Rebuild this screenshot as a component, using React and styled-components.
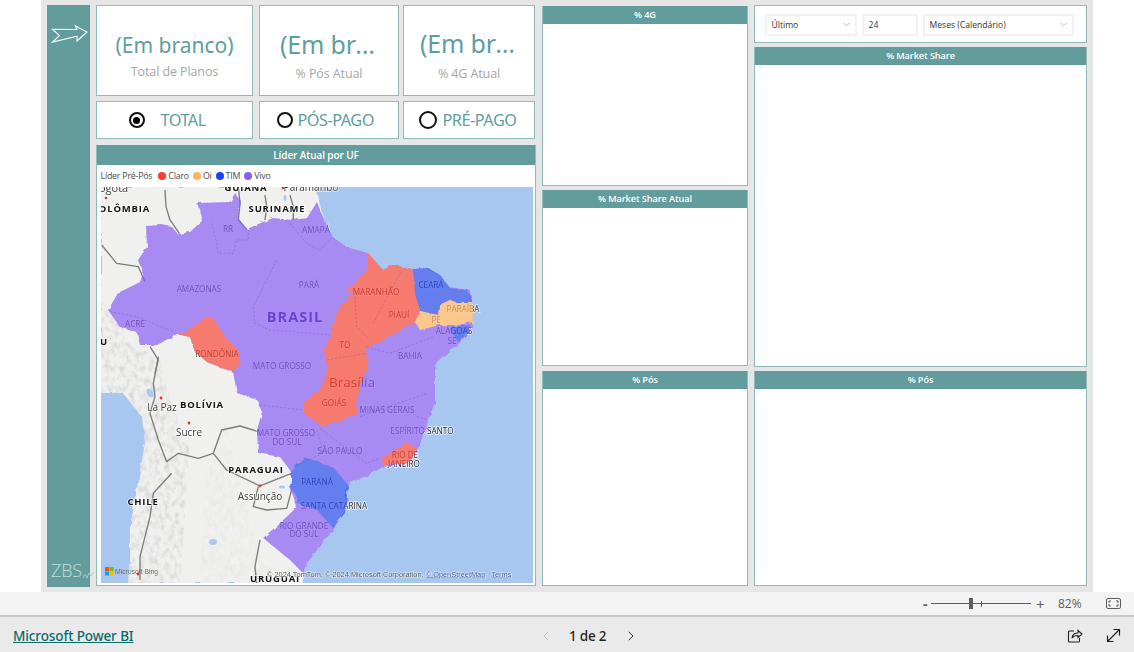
import React from 'react';
import styled, { createGlobalStyle } from 'styled-components';
import { ChevronLeft, ChevronRight, ChevronDown } from 'lucide-react';

const Global = createGlobalStyle`
  html, body { margin: 0; padding: 0; background: #fff; }
  body { font-family: "Open Sans", "Noto Sans", sans-serif; width: 1134px; height: 652px; overflow: hidden; }
`;

const TEAL = '#629c9c';
const EDGE = '#8fbcb9';

const Page = styled.div`display: flex; flex-direction: column; width: 1134px; height: 652px;`;
const Stage = styled.div`height: 592px; padding-left: 41px; padding-right: 41px; background: #fff; flex: none;`;
const Canvas = styled.div`
  height: 592px; background: #e6e6e6; padding: 5px 6px 5px 6px; display: grid; box-sizing: border-box;
  grid-template-columns: 43px 440px 206px 333px; column-gap: 6px;
`;
const Sidebar = styled.aside`
  background: ${TEAL}; height: 582px; display: flex; flex-direction: column; justify-content: space-between;
  align-items: flex-start; padding: 20px 0 7px 4px; box-sizing: border-box;
`;
const Logo = styled.div`display: flex; align-items: flex-end; color: #c4dcda; font-size: 18px; font-weight: 300; line-height: 20px; letter-spacing: -0.2px; gap: 1px;`;
const Col = styled.div`display: flex; flex-direction: column; gap: ${p => p.$gap || 4}px; height: 582px; min-width: 0;`;
const Row = styled.div`display: flex; gap: 0; height: ${p => p.$h}px; flex: none;`;
const Card = styled.div`
  width: ${p => p.$w}px; margin-right: ${p => p.$mr || 0}px; height: 100%; box-sizing: border-box; background: #fff;
  border: 1.5px solid ${EDGE}; display: flex; flex-direction: column; align-items: center; justify-content: center;
  padding: 10px 8px 0; flex: none; min-width: 0;
`;
const Value = styled.div`
  font-size: ${p => p.$size}px; line-height: 32px; color: #5f9ea0; max-width: ${p => p.$max || 140}px; overflow: hidden;
  text-overflow: ellipsis; white-space: nowrap; font-family: "Noto Sans", sans-serif; letter-spacing: ${p => p.$ls || 0}px;
`;
const Caption = styled.div`font-size: 12.5px; line-height: 20px; color: #a6a6a6; margin-top: ${p => p.$mt || 3}px; letter-spacing: -.1px;`;
const RadioCard = styled.div`
  width: ${p => p.$w}px; margin-right: ${p => p.$mr || 0}px; height: 100%; box-sizing: border-box; background: #fff; flex: none;
  border: 1.5px solid ${EDGE}; display: flex; align-items: center; gap: ${p => p.$gap}px; padding-left: ${p => p.$pad}px;
`;
const Radio = styled.span`
  display: flex; align-items: center; justify-content: center; box-sizing: border-box; flex: none;
  width: ${p => p.$s}px; height: ${p => p.$s}px; border-radius: 50%; border: 2.5px solid #111; background: #fff;
  &::after { content: ''; display: ${p => (p.$on ? 'block' : 'none')}; width: 7px; height: 7px; border-radius: 50%; background: #000; }
`;
const RadioLabel = styled.span`color: #5f9ea0; font-size: 16.3px; letter-spacing: -.5px; white-space: nowrap; font-family: "Noto Sans", sans-serif; margin-bottom: 1px;`;
const Panel = styled.section`
  display: flex; flex-direction: column; box-sizing: border-box; background: #fff; border: 1px solid ${EDGE};
  border-width: 0 1.5px 1.5px 1.5px; height: ${p => p.$h}px; margin-top: ${p => p.$mt || 0}px; flex: none; overflow: hidden;
`;
const Head = styled.h2`
  margin: 0 -1.5px; height: ${p => p.$h || 18}px; box-sizing: border-box; padding-bottom: 1px; flex: none; background: ${TEAL}; color: #fff; font-size: ${p => p.$fs || 9.2}px; font-weight: 600;
  display: flex; align-items: center; justify-content: center; letter-spacing: -.1px;
`;
const Legend = styled.div`display: flex; align-items: center; height: 22px; flex: none; padding-left: 3.5px; font-size: 8.8px; color: #4b4b4b; letter-spacing: -.2px;`;
const LegendTitle = styled.span`margin-right: 6px;`;
const LegendItem = styled.span`
  display: flex; align-items: center; margin-right: 4px; gap: 2px;
  &::before { content: ''; width: 8px; height: 8px; border-radius: 50%; background: ${p => p.$c}; }
`;
const MapBox = styled.div`margin: 0 1.5px 0 3.5px; height: 396px; flex: none; overflow: hidden;`;
const MapSvg = styled.svg`display: block; width: 432px; height: 396px; filter: blur(.3px);`;
const Slicer = styled.div`
  height: 38px; flex: none; background: #fff; border: 1.5px solid ${EDGE}; box-sizing: border-box; display: flex; align-items: center;
  padding: 1px 0 0 9.5px; gap: 5px;
`;
const Field = styled.div`
  width: ${p => p.$w}px; height: 22px; box-sizing: border-box; border: 2px solid #f2f2f2; display: flex; align-items: center; justify-content: space-between;
  padding: 0 3px 0 5px; font-size: 8.6px; color: #333; flex: none;
  svg { color: #888; }
`;
const ZoomBar = styled.div`
  height: 25px; flex: none; background: #f3f3f3; border-bottom: 2px solid #c9c9c9; box-sizing: border-box; display: flex;
  align-items: center; justify-content: flex-end; padding-right: 13px; color: #605e5c;
`;
const Minus = styled.span`font-size: 14px; font-weight: 700; width: 9px; line-height: 14px; margin-right: -1px;`;
const Track = styled.div`
  position: relative; width: 100px; height: 1px; background: #605e5c; margin-left: 0;
`;
const Thumb = styled.span`position: absolute; left: 38px; top: -5px; width: 4px; height: 11px; background: #605e5c;`;
const Tick = styled.span`position: absolute; left: 50px; top: -2px; width: 1px; height: 6px; background: #605e5c;`;
const Plus = styled.span`font-size: 15px; margin-left: 5px; width: 11px; line-height: 14px;`;
const Pct = styled.span`font-size: 12px; margin-left: 11px; width: 48px;`;
const Footer = styled.footer`
  flex: 1; background: #eaeaea; display: grid; grid-template-columns: 525px auto 1fr; align-items: center; padding: 2px 13px 0 13px;
`;
const Brand = styled.a`font-size: 13.5px; font-weight: 500; color: #0b6a6a; text-decoration: underline; font-family: "Noto Sans", sans-serif; letter-spacing: -.1px; justify-self: start;`;
const Pager = styled.div`display: flex; align-items: center; gap: 15px; font-size: 13.5px; font-weight: 500; color: #252423; letter-spacing: -.2px; font-family: "Noto Sans", sans-serif;`;
const PageText = styled.span`margin-right: 2px;`;
const Tools = styled.div`display: flex; gap: 23px; justify-self: end; align-items: center;`;

const ClipT = ({ x, y, t, k = 'reg' }) => {
  const styles = {
    reg: { fontSize: 8.2, fill: '#2c2c2c', fontWeight: 400, letterSpacing: 0 },
    city: { fontSize: 10, fill: '#3a3a3a', fontWeight: 400 },
    big2: { fontSize: 11, fill: '#3a3a3a', fontWeight: 400 },
    cap: { fontSize: 13.5, fill: '#7a1c14', fontWeight: 400 },
    bold: { fontSize: 9.5, fill: '#111', fontWeight: 700, letterSpacing: 0.8 },
    big: { fontSize: 14.5, fill: '#1e0667', fontWeight: 700, letterSpacing: 1 },
  }[k];
  return (
    <text x={x} y={y} textAnchor="middle" paintOrder="stroke" stroke="#fff" strokeWidth="1.6" strokeOpacity=".75"
      fontFamily="'Open Sans', sans-serif" {...styles}>{t}</text>
  );
};

const BRAZIL = '146,226 162,225 172,227 178,234 190,232 203,220 197,203 230,202 235,193 240,200 238,218 247,229 263,222 273,218 293,220 307,218 317,202 323,217 333,237 347,247 368,253 383,270 393,265 412,269 423,268 437,273 450,287 470,290 473,307 472,327 460,343 450,350 437,362 435,367 435,403 428,420 423,440 415,450 407,463 383,467 373,473 353,482 345,487 345,510 333,530 320,547 307,563 303,573 290,560 263,538 280,523 297,507 290,487 292,473 280,457 258,453 257,430 262,412 257,400 237,393 233,372 207,362 195,352 190,337 177,334 157,345 140,345 137,333 120,327 108,310 118,293 140,282 143,273 138,260 147,247';
const RED = '368,253 383,270 393,265 412,269 418,300 420,313 415,322 402,330 383,340 380,344 365,348 368,360 368,370 362,380 357,400 357,415 323,427 303,413 303,403 320,390 327,373 325,350 340,307 355,293 345,292 367,270';
const LAND = '101,187 315,187 330,240 300,300 300,500 303,583 128,583 130,560 130,527 145,443 142,417 123,393 101,393';

const labels = [
  [110, 192, 'Bogotá', 'big2'], [121, 212, 'COLÔMBIA', 'bold'], [246, 191, 'GUIANA', 'bold'], [311, 191, 'Paramaribo', 'city'],
  [277, 212, 'SURINAME', 'bold'], [228, 232, 'RR'], [316, 233, 'AMAPÁ'], [199, 292, 'AMAZONAS'], [309, 288, 'PARÁ'],
  [376, 295, 'MARANHÃO'], [431, 288, 'CEARÁ'], [399, 318, 'PIAUÍ'], [463, 312, 'PARAÍBA'], [436, 323, 'PE'], [454, 334, 'ALAGOAS'],
  [452, 344, 'SE'], [295, 322, 'BRASIL', 'big'], [135, 327, 'ACRE'], [94, 345, 'PERU', 'bold'], [217, 357, 'RONDÔNIA'], [345, 348, 'TO'],
  [410, 359, 'BAHIA'], [282, 369, 'MATO GROSSO'], [352, 387, 'Brasília', 'cap'], [334, 406, 'GOIÁS'], [387, 413, 'MINAS GERAIS'],
  [422, 434, 'ESPÍRITO SANTO'], [286, 436, 'MATO GROSSO'], [287, 445, 'DO SUL'], [340, 454, 'SÃO PAULO'], [405, 458, 'RIO DE'],
  [404, 467, 'JANEIRO'], [317, 485, 'PARANÁ'], [334, 509, 'SANTA CATARINA'], [304, 529, 'RIO GRANDE'], [304, 537, 'DO SUL'],
  [202, 408, 'BOLÍVIA', 'bold'], [162, 411, 'La Paz', 'city'], [189, 436, 'Sucre', 'city'], [256, 473, 'PARAGUAI', 'bold'],
  [260, 500, 'Assunção', 'city'], [143, 505, 'CHILE', 'bold'], [275, 582, 'URUGUAI', 'bold'],
];

const BrazilMap = () => (
  <MapSvg viewBox="101 187 432 396" role="img" aria-label="Mapa do Brasil">
    <defs>
      <filter id="terrain" x="0" y="0" width="100%" height="100%">
        <feTurbulence type="fractalNoise" baseFrequency=".2 .14" numOctaves="3" seed="7" />
        <feColorMatrix values="0 0 0 0 .6  0 0 0 0 .6  0 0 0 0 .6  1.5 0 0 0 -.62" />
        <feGaussianBlur stdDeviation=".5" />
        <feComposite in2="SourceGraphic" operator="in" />
      </filter>
      <filter id="jag" x="-5%" y="-5%" width="110%" height="110%">
        <feTurbulence type="fractalNoise" baseFrequency=".14" numOctaves="2" seed="3" result="n" />
        <feDisplacementMap in="SourceGraphic" in2="n" scale="4" />
      </filter>
      <clipPath id="landClip"><polygon points={LAND} /></clipPath>
    </defs>
    <rect x="101" y="187" width="432" height="396" fill="#a8c7f0" />
    <polygon points={LAND} fill="#f0f0ee" filter="url(#jag)" />
    <polygon points={BRAZIL} fill="#f0f0ee" filter="url(#jag)" />
    <g clipPath="url(#landClip)">
      <polygon points="101,300 135,345 160,360 170,400 190,450 180,583 128,583 130,527 145,443 142,417 123,393 101,393" fill="#000" filter="url(#terrain)" />
      <polygon points="225,420 260,560 300,583 200,583 205,480" fill="#000" opacity=".3" filter="url(#terrain)" />
    </g>
    <g transform="translate(90 360) scale(.3333)" fill="none" stroke="#7d7d78" strokeWidth="4" strokeLinejoin="round" filter="url(#jag)">
      <path d="M205 -10L190 70 195 110 180 160 205 240 230 305 265 280 325 295 370 280 410 330 510 378 605 340" />
      <path d="M370 280L395 210 450 198 505 215" />
      <path d="M605 390L590 445 530 450 490 440 505 380" />
      <path d="M245 340L190 400 180 470 150 590 150 660" />
      <path d="M510 540L495 620 500 670" />
    </g>
    <g transform="translate(90 140) scale(.3333)" fill="none" stroke="#7d7d78" strokeWidth="4" strokeLinejoin="round" filter="url(#jag)">
      <path d="M35 315L80 370 145 380 165 425" />
      <path d="M225 150L228 200 240 240 268 280" />
      <path d="M445 140L450 190 445 240 470 268" />
      <path d="M525 165L530 200 525 240" />
      <path d="M600 165L610 200 610 240" />
      <path d="M180 620L205 660 195 700" />
    </g>
    <g fill="#a9c8ef">
      <ellipse cx="150" cy="393" rx="3" ry="5" transform="rotate(-30 150 393)" />
      <ellipse cx="213" cy="542" rx="4" ry="3" />
      <ellipse cx="282" cy="487" rx="3" ry="1.500" />
      <ellipse cx="285" cy="198" rx="1.500" ry="3" />
    </g>
    {labels.map(([x, y, t, k]) => <ClipT key={t + x} x={x} y={y} t={t} k={k} />)}
    <g fill="#d9363e">
      <circle cx="106" cy="198" r="1.300" /><circle cx="283" cy="188" r="1.300" /><circle cx="161" cy="398" r="1.400" />
      <circle cx="189" cy="423" r="1.400" /><circle cx="260" cy="486" r="1.400" /><circle cx="138" cy="574" r="1.400" />
    </g>
    <g opacity=".7" filter="url(#jag)">
      <polygon points={BRAZIL} fill="#8a5ff6" />
      <polygon points={RED} fill="#fb4a37" />
      <polygon points="177,334 190,330 205,317 213,318 225,337 238,350 240,362 233,372 207,362 195,352 190,337" fill="#fb4a37" />
      <polygon points="382,458 407,442 417,450 407,463 383,465" fill="#fb4a37" />
      <polygon points="413,269 428,268 440,275 450,288 468,290 473,303 458,303 450,300 439,305 438,315 420,311 415,293" fill="#2a4df0" />
      <polygon points="420,311 438,315 439,305 450,300 458,303 473,303 473,322 457,325 440,325 420,330 415,322" fill="#ffb766" />
      <polygon points="450,328 470,325 468,333 458,342 452,333" fill="#2a4df0" />
      <polygon points="293,467 307,458 333,467 348,485 345,513 333,528 317,510 297,503 297,497 290,487" fill="#2a4df0" />
    </g>
    <g transform="translate(90 140) scale(.3333)" fill="none" stroke="#5d4a9c" strokeOpacity=".3" strokeWidth="3" strokeDasharray="7 5">
      <path d="M365 250L378 300 385 340 430 340 440 300 475 300 475 270M600 250L650 310 690 330 730 290M560 360L490 500 495 550 540 570 720 585M60 515L140 530 250 575M795 470L800 560 840 600M850 550L935 390" />
      <path d="M830 620L900 640 1030 590M710 660L830 640" />
    </g>
    <g transform="translate(90 360) scale(.3333)" fill="none" stroke="#5d4a9c" strokeOpacity=".3" strokeWidth="3" strokeDasharray="7 5">
      <path d="M510 135L640 150M690 205L830 310 870 295M810 170L1010 100M680 210L700 280 610 320M980 170L1015 180" />
    </g>
    <rect x="105" y="567" width="4" height="4" fill="#f25022" /><rect x="109.500" y="567" width="4" height="4" fill="#7fba00" />
    <rect x="105" y="571.500" width="4" height="4" fill="#00a4ef" /><rect x="109.500" y="571.500" width="4" height="4" fill="#ffb900" />
    <text x="115" y="574" fontSize="6.800" fill="#6c6c6c" fontFamily="'Liberation Sans', sans-serif">Microsoft Bing</text>
    <text x="267" y="576.500" fontSize="7.400" fill="#555" stroke="#fff" strokeWidth="1.200" strokeOpacity=".6" paintOrder="stroke" fontFamily="'Liberation Sans', sans-serif">
      © 2024 TomTom, © 2024 Microsoft Corporation, <tspan textDecoration="underline" fill="#3b5a9a">© OpenStreetMap</tspan>{'  '}
      <tspan dx="4" textDecoration="underline" fill="#3b5a9a">Terms</tspan>
    </text>
  </MapSvg>
);

const Pick = ({ w, children }) => (
  <Field $w={w}><span>{children}</span><ChevronDown size={11} strokeWidth={1.2} /></Field>
);

export default function App() {
  return (
    <Page>
      <Global />
      <Stage>
        <Canvas>
          <Sidebar>
            <svg width="37" height="18" viewBox="51 25 37 18" fill="none" stroke="#fff" strokeWidth="1.100">
              <path d="M52.500 29.300L77 29.500 75.500 26 87 32 77 41 77 36.300 52.500 42 59.500 35.500Z" />
            </svg>
            <Logo>ZBS
              <svg width="11" height="9" viewBox="0 0 11 9" fill="none" stroke="#a8cdca" strokeWidth=".900"><path d="M0 7L2 3 4 7 6 2 8 5 10.500 1" /></svg>
            </Logo>
          </Sidebar>
          <Col $gap={5}>
            <Row $h={91}>
              <Card $w={157} $mr={6}><Value $size={21}>(Em branco)</Value><Caption $mt={1}>Total de Planos</Caption></Card>
              <Card $w={140} $mr={4}><Value $size={25} $max={98} $ls={-.2}>(Em branco)</Value><Caption $mt={4}>% Pós Atual</Caption></Card>
              <Card $w={132}><Value $size={25} $max={98} $ls={-.2}>(Em branco)</Value><Caption $mt={5}>% 4G Atual</Caption></Card>
            </Row>
            <Row $h={38}>
              <RadioCard $w={157} $mr={6} $pad={31.500} $gap={16}><Radio $s={16} $on /><RadioLabel>TOTAL</RadioLabel></RadioCard>
              <RadioCard $w={140} $mr={4} $pad={16.500} $gap={5}><Radio $s={16} /><RadioLabel>PÓS-PAGO</RadioLabel></RadioCard>
              <RadioCard $w={132} $pad={14.500} $gap={6}><Radio $s={18} /><RadioLabel>PRÉ-PAGO</RadioLabel></RadioCard>
            </Row>
            <Panel $h={441} $mt={1}>
              <Head $h={20} $fs={10}>Líder Atual por UF</Head>
              <Legend>
                <LegendTitle>Líder Pré-Pós</LegendTitle>
                <LegendItem $c="#fd3a2d">Claro</LegendItem>
                <LegendItem $c="#ffb35c">Oi</LegendItem>
                <LegendItem $c="#1a3dff">TIM</LegendItem>
                <LegendItem $c="#8a5cf6">Vivo</LegendItem>
              </Legend>
              <MapBox><BrazilMap /></MapBox>
            </Panel>
          </Col>
          <Col $gap={4}>
            <Panel $h={180} $mt={1}><Head>% 4G</Head></Panel>
            <Panel $h={176}><Head>% Market Share Atual</Head></Panel>
            <Panel $h={215} $mt={1}><Head>% Pós</Head></Panel>
          </Col>
          <Col $gap={4}>
            <Slicer>
              <Pick w={92}>Último</Pick>
              <Field $w={56}>24</Field>
              <Pick w={151}>Meses (Calendário)</Pick>
            </Slicer>
            <Panel $h={320}><Head>% Market Share</Head></Panel>
            <Panel $h={215}><Head>% Pós</Head></Panel>
          </Col>
        </Canvas>
      </Stage>
      <ZoomBar>
        <Minus>-</Minus>
        <Track><Thumb /><Tick /></Track>
        <Plus>+</Plus>
        <Pct>82%</Pct>
        <svg width="15" height="11" viewBox="0 0 15 11" fill="none" stroke="#605e5c"><rect x=".5" y=".5" width="14" height="10" rx="1.5" /><path d="M3 5V3H5M12 5V3H10M3 6V8H5M12 6V8H10" /></svg>
      </ZoomBar>
      <Footer>
        <Brand>Microsoft Power BI</Brand>
        <Pager>
          <ChevronLeft size={16} strokeWidth={1.3} color="#b9b9b9" />
          <PageText>1 de 2</PageText>
          <ChevronRight size={16} strokeWidth={1.5} color="#333" />
        </Pager>
        <Tools>
          <svg width="16" height="16" viewBox="0 0 16 16" fill="none" stroke="#201f1e" strokeWidth="1.100"><path d="M7 3H2.500A1 1 0 0 0 1.500 4V13A1 1 0 0 0 2.500 14H11.500A1 1 0 0 0 12.500 13V10" /><path d="M5 10C5.500 6.500 8 5 11 5V2.500L15 6 11 9.500V7.500C8.500 7.500 6.500 8 5 10Z" /></svg>
          <svg width="15" height="15" viewBox="0 0 15 15" fill="none" stroke="#201f1e" strokeWidth="1.200"><path d="M1.500 13.500L13.500 1.500M7.500 1.500H13.500V7.500M1.500 7.500V13.500H7.500" /></svg>
        </Tools>
      </Footer>
    </Page>
  );
}
